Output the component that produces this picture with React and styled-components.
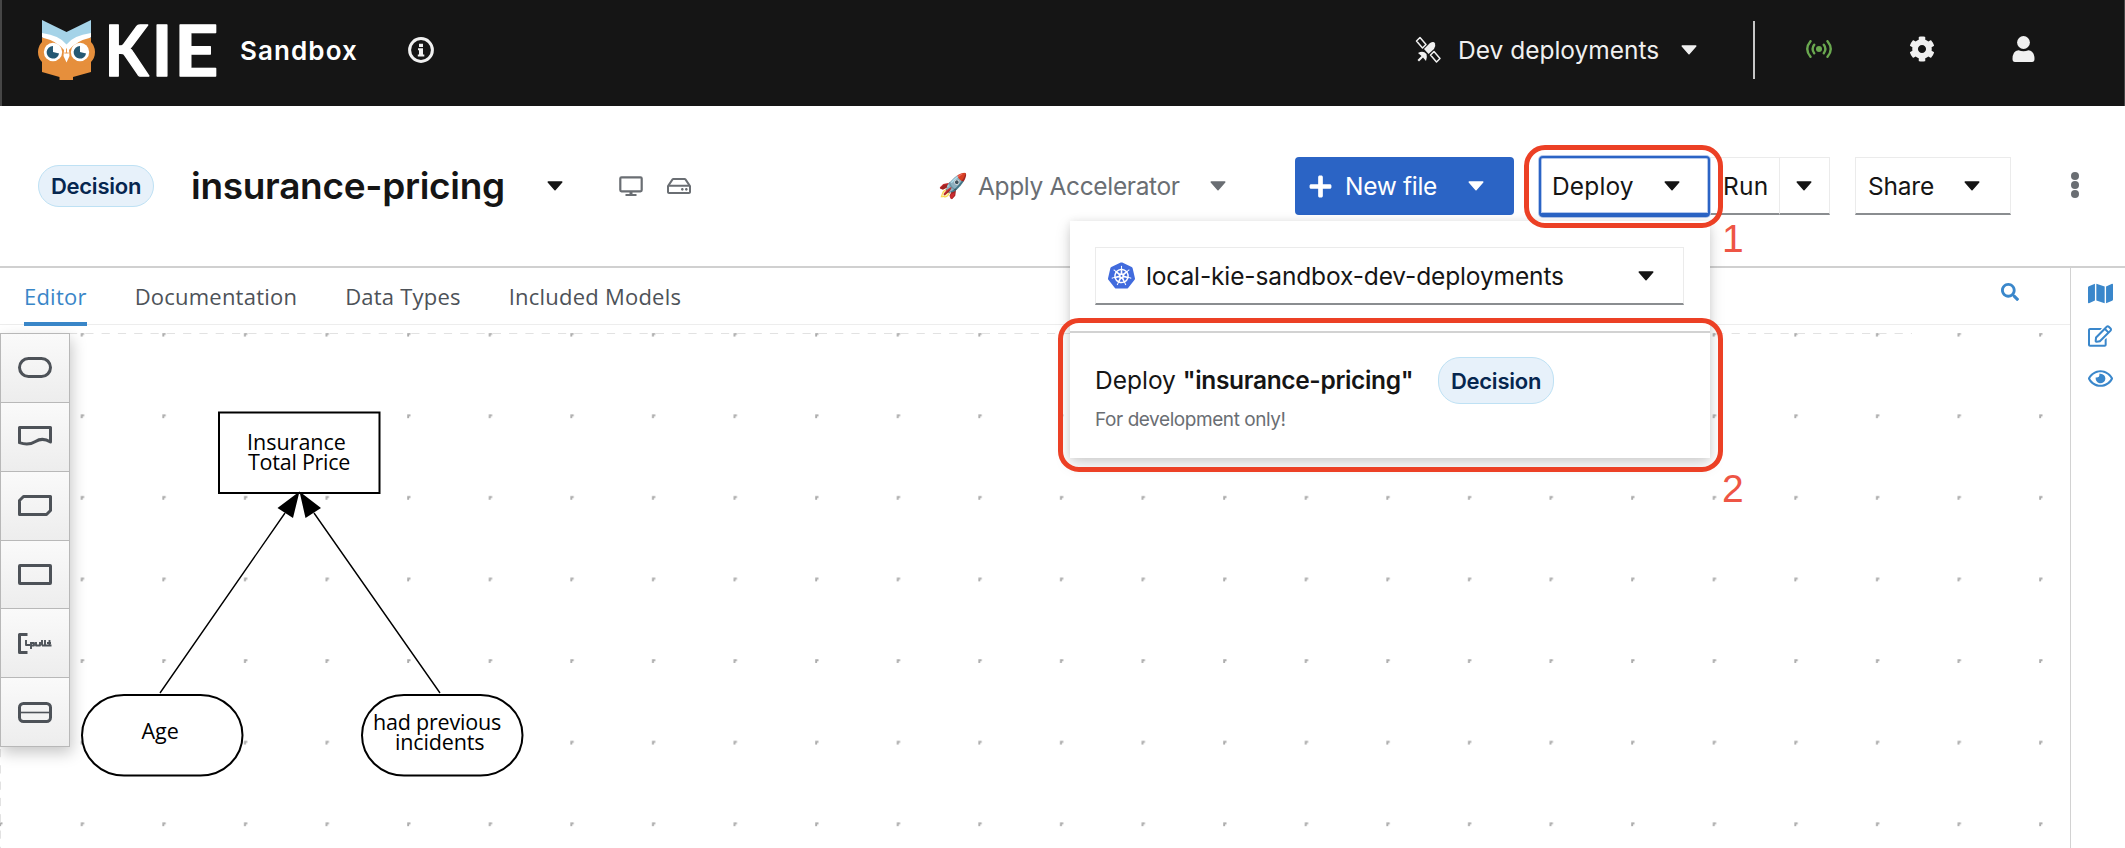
import React from "react";
import styled, { createGlobalStyle, css } from "styled-components";
import { SiKubernetes } from "react-icons/si";
import { FaCog, FaRegHdd, FaMap, FaRegEdit, FaRegEye, FaSearch, FaPlus } from "react-icons/fa";

const GlobalStyle = createGlobalStyle`
  * { box-sizing: border-box; }
  body {
    margin: 0;
    background: #fff;
    color: #151515;
    font-family: Inter, "Liberation Sans", sans-serif;
    overflow: hidden;
  }
  svg { display: block; flex: none; }
`;

const Page = styled.div`
  position: relative;
  display: flex;
  flex-direction: column;
  width: 2125px;
  height: 848px;
  overflow: hidden;
`;

/* ---------- masthead ---------- */

const Masthead = styled.header`
  display: flex;
  align-items: center;
  height: 106px;
  padding: 0 0 6px 35px;
  background: #151515;
  border-left: 2px solid #464646;
  border-right: 1px solid #464646;
  color: #f0f0f0;
`;

const ProductName = styled.span`
  width: 168px;
  margin-left: 13px;
  color: #fff;
  font-size: 26px;
  font-weight: 600;
  letter-spacing: 1.1px;
`;

const MastheadTools = styled.div`
  display: flex;
  align-items: center;
  margin-left: auto;
  padding-right: 89px;
`;

const MastheadMenu = styled.button`
  display: flex;
  align-items: center;
  gap: 16px;
  padding: 0;
  margin-right: 56px;
  border: 0;
  background: none;
  color: inherit;
  font: 400 24.5px Inter, sans-serif;
  white-space: nowrap;

  span { width: 207px; text-align: left; }
`;

const Divider = styled.i`
  width: 2px;
  height: 58px;
  margin-right: 51px;
  background: #c6c6c6;
`;

const ToolIcons = styled.div`
  display: flex;
  align-items: center;
  gap: 77px;
  padding-bottom: 2px;
`;

/* ---------- file toolbar ---------- */

const FileBar = styled.section`
  display: flex;
  align-items: center;
  height: 162px;
  padding: 0 46px 0 38px;
  border-bottom: 2px solid #d0d0d0;
`;

const Badge = styled.span`
  display: inline-flex;
  align-items: center;
  justify-content: center;
  width: 116px;
  height: ${(p) => (p.$tall ? 47 : 42)}px;
  border: 1.5px solid #bee1f4;
  border-radius: 22px;
  background: #e7f1fa;
  color: #06264f;
  font-size: 22px;
  font-weight: 600;
  letter-spacing: -0.24px;
`;

const FileName = styled.h1`
  width: 356px;
  margin: 0 0 0 37px;
  font-size: 37px;
  font-weight: 600;
  letter-spacing: -0.3px;
  line-height: 44px;
`;

const ViewIcons = styled.div`
  display: flex;
  align-items: center;
  gap: 24px;
  margin-left: 56px;
  color: #6a6e73;
`;

const Actions = styled.div`
  display: flex;
  align-items: center;
  margin-left: auto;
`;

const Accelerator = styled.button`
  display: flex;
  align-items: center;
  width: 288px;
  margin-right: 69px;
  padding: 0;
  border: 0;
  background: none;
  color: #6a6e73;
  font: 400 24.5px Inter, sans-serif;
  letter-spacing: -0.35px;
  white-space: nowrap;

  svg { margin-left: auto; }
`;

const Rocket = styled.span`
  width: 40px;
  font-size: 24px;
  line-height: 30px;
  letter-spacing: 0;
  text-align: left;
`;

const toggle = css`
  display: flex;
  align-items: center;
  height: 58px;
  padding: 0 0 0 12px;
  border: 1px solid #ebebeb;
  border-bottom: 2px solid #8a8d90;
  background: #fff;
  color: #151515;
  font: 400 24.5px Inter, sans-serif;
`;

const NewFileButton = styled.button`
  display: flex;
  align-items: center;
  width: 219px;
  height: 58px;
  margin-right: 25px;
  padding: 0 30px 0 13px;
  border: 0;
  border-radius: 4px;
  background: #2b64c5;
  color: #fff;
  font: 400 24.5px Inter, sans-serif;
  letter-spacing: -0.3px;

  span { margin: 0 auto 0 12px; }
`;

const DeployButton = styled.button`
  ${toggle}
  position: relative;
  z-index: 2;
  width: 171px;
  height: 61px;
  padding: 2px 28px 0 11px;
  justify-content: space-between;
  letter-spacing: 0.15px;
  border: 2px solid #2b64c5;
  border-bottom: 4px solid #2b64c5;
  border-radius: 4px;
  box-shadow: 0 0 0 1px #b4c8ec, inset 0 0 0 1px #b4c8ec;
`;

const RunButton = styled.button`
  ${toggle}
  width: 69px;
  padding-left: 13px;
  border-left: 0;
  border-right: 0;
  letter-spacing: 0.3px;
`;

const RunToggle = styled.button`
  ${toggle}
  width: 51px;
  margin-right: 25px;
  padding-left: 16px;
`;

const ShareButton = styled.button`
  ${toggle}
  width: 156px;
  padding-right: 30px;
  justify-content: space-between;
  letter-spacing: -0.2px;
`;

const Kebab = styled.button`
  display: grid;
  gap: 1px;
  margin-left: 60px;
  padding: 0 0 2px;
  border: 0;
  background: none;

  i {
    width: 8px;
    height: 8px;
    border-radius: 50%;
    background: #6a6e73;
  }
`;

/* ---------- deploy menu ---------- */

const DeployMenu = styled.div`
  position: absolute;
  z-index: 3;
  top: 221px;
  left: 1070px;
  display: flex;
  flex-direction: column;
  width: 640px;
  height: 237px;
  padding-top: 26px;
  background: #fff;
  box-shadow: 0 6px 14px rgba(3, 3, 3, 0.17), 0 0 8px rgba(3, 3, 3, 0.07);
`;

const AccountSelect = styled.button`
  ${toggle}
  width: 589px;
  margin: 0 0 26px 25px;
  padding: 0 29px 0 12px;
  letter-spacing: -0.13px;

  span { margin: 0 auto 0 11px; }
`;

const DeployItem = styled.div`
  display: flex;
  flex-direction: column;
  flex: 1;
  padding: 24px 26px 0;
  border-top: 2px solid #d2d2d2;
`;

const DeployTitle = styled.div`
  display: flex;
  align-items: center;
  justify-content: space-between;
  width: 459px;
  margin-left: -1px;
  font-size: 24.5px;
  white-space: pre;

  b { font-weight: 600; letter-spacing: -0.34px; }
`;

const DeployText = styled.span`
  padding-bottom: 2px;
`;

const DeployNote = styled.div`
  margin-top: 3px;
  margin-left: -1px;
  color: #6a6e73;
  font-size: 19px;
  line-height: 26px;
  letter-spacing: -0.43px;
`;

/* ---------- editor ---------- */

const Workspace = styled.main`
  display: flex;
  height: 580px;
`;

const Editor = styled.div`
  display: flex;
  flex-direction: column;
  width: 2070px;
`;

const Tabs = styled.nav`
  display: flex;
  align-items: stretch;
  height: 57px;
  padding: 0 51px 0 24px;
  gap: 49px;
  border-bottom: 1px solid #ededed;
  color: #3a87cb;

  > svg { margin: 15px 0 0 auto; }
`;

const Tab = styled.a`
  position: relative;
  display: flex;
  align-items: center;
  margin-left: -1px;
  color: #4d5258;
  font: 400 22px "Open Sans", sans-serif;
  letter-spacing: 0.22px;

  ${(p) =>
    p.$active &&
    css`
      margin-left: 0;
      color: #3986c8;

      &::after {
        content: "";
        position: absolute;
        z-index: 1;
        right: 0;
        bottom: -2px;
        left: 0;
        height: 4px;
        background: #3986c8;
      }
    `}
`;

const Canvas = styled.div`
  position: relative;
  flex: 1;
`;

const Palette = styled.div`
  position: absolute;
  top: 8px;
  left: 0;
  display: grid;
  grid-template-rows: repeat(6, 1fr);
  width: 70px;
  height: 414px;
  border: 1px solid #b8b8b8;
  border-bottom: 0;
  box-shadow: 2px 6px 14px rgba(3, 3, 3, 0.22);
`;

const PaletteItem = styled.button`
  display: flex;
  align-items: center;
  justify-content: center;
  padding: 0;
  border: 0;
  border-bottom: 1px solid #b8b8b8;
  background: linear-gradient(#fafafa, #ededed);
`;

const Dock = styled.aside`
  display: flex;
  flex-direction: column;
  align-items: center;
  width: 55px;
  padding-top: 13px;
  padding-left: 4px;
  border-left: 1px solid #d2d2d2;
  color: #3a87cb;

  svg + svg { margin-top: 18px; }
`;

/* ---------- callouts ---------- */

const Callout = styled.div`
  position: absolute;
  z-index: 4;
  top: ${(p) => p.$top}px;
  left: ${(p) => p.$left}px;
  width: ${(p) => p.$width}px;
  height: ${(p) => p.$height}px;
  border: 5px solid #ec4025;
  border-radius: 21px;
`;

const CalloutNumber = styled.span`
  position: absolute;
  z-index: 4;
  top: ${(p) => p.$top}px;
  left: ${(p) => p.$left}px;
  color: #ee5545;
  font: 400 39px/44px "Liberation Sans", Arial, sans-serif;
`;

/* ---------- drawings ---------- */

const Caret = () => (
  <svg width="16" height="10" viewBox="0 0 16 10">
    <path d="M1.2 1h13.6L8 8.8z" fill="currentColor" stroke="currentColor" strokeWidth="1.4" strokeLinejoin="round" />
  </svg>
);

const KieLogo = () => (
  <svg width="190" height="98" viewBox="37 1 190 98">
    <path d="M42 38 V72 L59.5 77 V80 H73 V77 L91 72 V38z" fill="#e68f3c" />
    <circle cx="52.5" cy="52" r="14.5" fill="#e68f3c" />
    <circle cx="80.500" cy="52" r="14.500" fill="#e68f3c" />
    <path d="M42 20 L66.500 32 L91 20 V37 Q72 39 66.500 48 Q61 39 42 37z" fill="#a5d3e8" />
    <path d="M42 33 Q60 35.500 66.500 44.500 Q73 35.500 91 33 V37.500 Q76 41 69 50 L69.500 56 L66.500 62.500 L63.500 56 L64 50 Q57 41 42 37.500z" fill="#fff" />
    <circle cx="53" cy="52" r="9.200" fill="#fff" />
    <circle cx="80" cy="52" r="9.200" fill="#fff" />
    <path d="M53 52 V46 A6.300 6.300 0 1 0 59.100 53.500z" fill="#255873" />
    <path d="M80 52 V46 A6.300 6.300 0 1 0 86.100 53.500z" fill="#255873" />
    <circle cx="55.500" cy="49" r="2.600" fill="#fff" />
    <circle cx="82.500" cy="49" r="2.600" fill="#fff" />
    <path d="M66.500 48.500v4.500M64.300 53h4.400" stroke="#e68f3c" strokeWidth="0.9" />
    <g fill="#fff" stroke="#fff" strokeWidth="1.400" strokeLinejoin="round" fontFamily="Lato, sans-serif" fontWeight="700" fontSize="71">
      <text transform="translate(104.500 75.500) scale(.9 1)">K</text>
      <text transform="translate(151.500 75.500)">I</text>
      <text transform="translate(174 75.500) scale(1.090 1)">E</text>
    </g>
  </svg>
);

const InfoIcon = () => (
  <svg width="26" height="26" viewBox="0 0 26 26">
    <circle cx="13" cy="13" r="11.400" fill="none" stroke="#f0f0f0" strokeWidth="3" />
    <path d="M11 6.800h4v3.200h-4zM10 11.200h5v6.300h1.300v2H9.800v-2H11v-4.300h-1z" fill="#f0f0f0" />
  </svg>
);

const SatelliteIcon = () => (
  <svg width="27" height="28" viewBox="0 0 27 28">
    <g fill="none" stroke="#f0f0f0" strokeWidth="1.500" strokeLinejoin="round">
      <path d="M1.500 5 L5 1.500 L11 8.500 L7.500 12z" />
      <path d="M15.500 19 L19 15.500 L25 22.500 L21.500 26z" />
    </g>
    <path d="M9 13 L15 7 Q19 5 20 7.500 Q21 10 19 13 L13.500 18z" fill="#f0f0f0" />
    <path d="M3 17 Q8 14 11.500 18 Q12.500 21 11 25 L8 21.500 L4 25.500 L2.500 24 L6.500 20z" fill="#f0f0f0" />
  </svg>
);

const SignalIcon = () => (
  <svg width="26" height="18" viewBox="0 0 26 18" fill="none" stroke="#6aa84f" strokeWidth="2.400" strokeLinecap="round">
    <path d="M4.500 1.200 Q-2 9 4.500 16.800M8.200 4.800 Q5 9 8.200 13.200M17.800 4.800 Q21 9 17.800 13.200M21.500 1.200 Q28 9 21.500 16.800" />
    <circle cx="13" cy="9" r="3" fill="#6aa84f" stroke="none" />
  </svg>
);

const UserIcon = () => (
  <svg width="23" height="26" viewBox="0 0 23 26" fill="#f0f0f0">
    <circle cx="11.500" cy="6.500" r="6.400" />
    <path d="M6.500 14.200 Q11.500 16.200 16.500 14.200 Q22.500 15 22.500 23 Q22.500 26 20 26 H3 Q.5 26 .5 23 Q.5 15 6.500 14.200z" />
  </svg>
);

const MonitorIcon = () => (
  <svg width="24" height="21" viewBox="0 0 24 21">
    <rect x="1.300" y="1.300" width="21.400" height="14" rx="1.200" fill="none" stroke="currentColor" strokeWidth="2.200" />
    <path d="M10.500 15h3v3h4v2h-11v-2h4z" fill="currentColor" />
  </svg>
);

const paletteShapes = [
  <rect x="1.500" y="1.500" width="31" height="18" rx="9" />,
  <path d="M1.500 1.500h31v14.500q-8-5-15-.5t-16 1.200z" />,
  <path d="M5.500 1.500h27v14l-4 4h-27v-14z" />,
  <rect x="1.500" y="1.500" width="31" height="18" rx=".5" />,
  <>
    <path d="M9.500 1.500h-8v18h8" />
    <path d="M8 7v5h4M13 9v7M13 10h3v2.500h-3M18 9v3.500h4V9M24 7v5.500M27 7v5.500M31.500 7v5.500M24 12.500h9.500M29 10h4" strokeWidth="1.900" />
  </>,
  <>
    <rect x="1.500" y="1.500" width="31" height="18" rx="4" />
    <path d="M2 10.500h30" strokeWidth="1.600" />
  </>,
];

const Diagram = () => (
  <svg width="2070" height="523" viewBox="0 325 2070 523">
    <defs>
      <pattern id="grid" x="-2" y="331.600" width="81.600" height="81.600" patternUnits="userSpaceOnUse">
        <path d="M1.200 1.200h3.300v2h-1.400v1.700h-1.900z" fill="#acacac" />
      </pattern>
    </defs>
    <rect x="0" y="333" width="2070" height="515" fill="url(#grid)" />
    <path d="M69 333.500H1912" stroke="#e2e2e2" strokeDasharray="8.200 8.100" />
    <path d="M.5 749V848" stroke="#e2e2e2" strokeDasharray="8.200 8.100" />
    <g fill="#fff" stroke="#000" strokeWidth="2">
      <rect x="219" y="412.500" width="160.500" height="80.500" />
      <rect x="82" y="695" width="160.500" height="80.500" rx="42" ry="40.200" />
      <rect x="362" y="695" width="160.500" height="80.500" rx="42" ry="40.200" />
    </g>
    <path d="M160 693 L285 513M440 693 L314 513" stroke="#000" strokeWidth="1.400" />
    <path d="M299.500 491.500 L277.500 508 L293 518z M299.500 491.500 L305.500 518 L321 508z" />
    <g fontFamily="Open Sans, sans-serif" fontSize="21.500">
      <text x="247" y="449.600">Insurance</text>
      <text x="248" y="470.300" letterSpacing="-.25">Total Price</text>
      <text x="141.500" y="739">Age</text>
      <text x="373" y="729.800" letterSpacing="-.2">had previous</text>
      <text x="395" y="750.300" letterSpacing="-.15">incidents</text>
    </g>
  </svg>
);

export default function App() {
  return (
    <Page>
      <GlobalStyle />
      <Masthead>
        <KieLogo />
        <ProductName>Sandbox</ProductName>
        <InfoIcon />
        <MastheadTools>
          <MastheadMenu>
            <SatelliteIcon />
            <span>Dev deployments</span>
            <Caret />
          </MastheadMenu>
          <Divider />
          <ToolIcons>
            <SignalIcon />
            <FaCog size={26} />
            <UserIcon />
          </ToolIcons>
        </MastheadTools>
      </Masthead>

      <FileBar>
        <Badge>Decision</Badge>
        <FileName>insurance-pricing</FileName>
        <Caret />
        <ViewIcons>
          <MonitorIcon />
          <FaRegHdd size={24} />
        </ViewIcons>
        <Actions>
          <Accelerator>
            <Rocket>🚀</Rocket>
            Apply Accelerator
            <Caret />
          </Accelerator>
          <NewFileButton>
            <FaPlus size={25} />
            <span>New file</span>
            <Caret />
          </NewFileButton>
          <DeployButton>
            Deploy
            <Caret />
          </DeployButton>
          <RunButton>Run</RunButton>
          <RunToggle>
            <Caret />
          </RunToggle>
          <ShareButton>
            Share
            <Caret />
          </ShareButton>
          <Kebab>
            <i />
            <i />
            <i />
          </Kebab>
        </Actions>
      </FileBar>

      <Workspace>
        <Editor>
          <Tabs>
            <Tab $active>Editor</Tab>
            <Tab>Documentation</Tab>
            <Tab>Data Types</Tab>
            <Tab>Included Models</Tab>
            <FaSearch size={18} />
          </Tabs>
          <Canvas>
            <Diagram />
            <Palette>
              {paletteShapes.map((shape, i) => (
                <PaletteItem key={i}>
                  <svg width="34" height="21" viewBox="0 0 34 21" fill="none" stroke="#4d5258" strokeWidth="3" strokeLinejoin="round">
                    {shape}
                  </svg>
                </PaletteItem>
              ))}
            </Palette>
          </Canvas>
        </Editor>
        <Dock>
          <FaMap size={25} />
          <FaRegEdit size={24} />
          <FaRegEye size={25} />
        </Dock>
      </Workspace>

      <DeployMenu>
        <AccountSelect>
          <SiKubernetes size={27} color="#416bdd" />
          <span>local-kie-sandbox-dev-deployments</span>
          <Caret />
        </AccountSelect>
        <DeployItem>
          <DeployTitle>
            <DeployText>
              Deploy <b>"insurance-pricing"</b>
            </DeployText>
            <Badge $tall>Decision</Badge>
          </DeployTitle>
          <DeployNote>For development only!</DeployNote>
        </DeployItem>
      </DeployMenu>

      <Callout $top={145} $left={1524} $width={199} $height={83} />
      <CalloutNumber $top={217} $left={1722}>1</CalloutNumber>
      <Callout $top={318} $left={1058} $width={665} $height={154} />
      <CalloutNumber $top={467} $left={1722}>2</CalloutNumber>
    </Page>
  );
}
